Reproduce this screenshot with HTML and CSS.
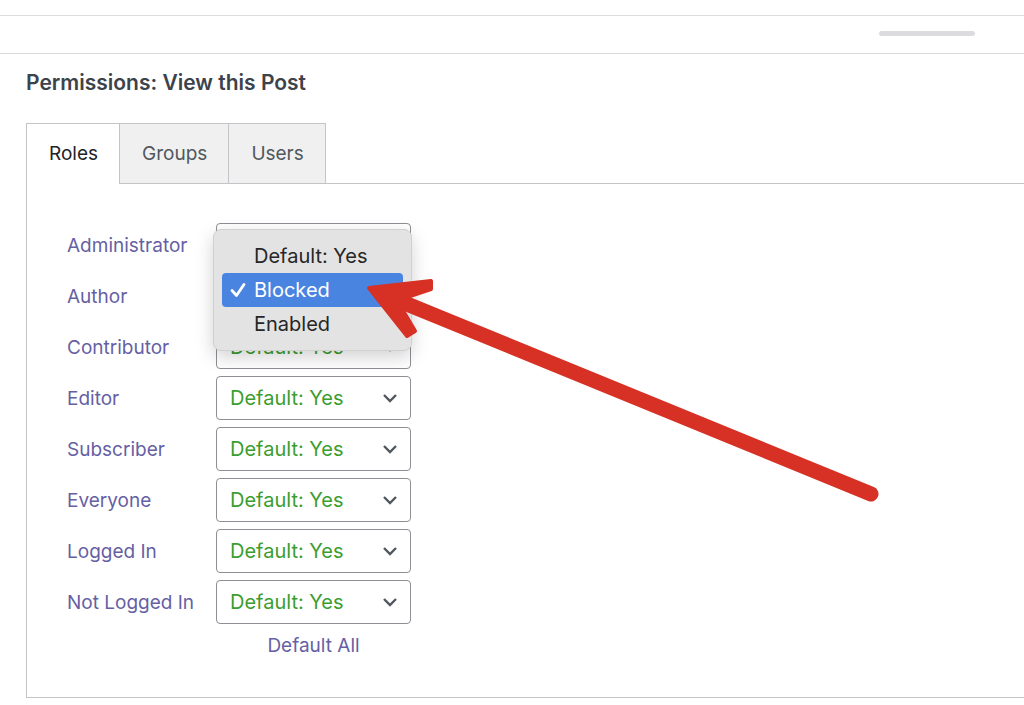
FILE: index.html
```html
<!DOCTYPE html>
<html lang="en">
<head>
  <meta charset="UTF-8" />
  <title>Permissions: View this Post</title>
  <link rel="stylesheet" href="styles.css">
</head>
<body>
  <div class="topbar">
    <span class="handle"></span>
  </div>

  <div class="content">
    <h2>Permissions: View this Post</h2>

    <div class="tabs">
      <div class="tab active">Roles</div>
      <div class="tab">Groups</div>
      <div class="tab">Users</div>
    </div>

    <div class="panel">
      <div class="roles">
        <span class="role">Administrator</span>
        <div class="select">Default: Yes<svg class="chev" viewBox="0 0 16 10"><path d="M2 2l6 6 6-6"/></svg></div>
        <span class="role">Author</span>
        <div class="select">Default: Yes<svg class="chev" viewBox="0 0 16 10"><path d="M2 2l6 6 6-6"/></svg></div>
        <span class="role">Contributor</span>
        <div class="select">Default: Yes<svg class="chev" viewBox="0 0 16 10"><path d="M2 2l6 6 6-6"/></svg></div>
        <span class="role">Editor</span>
        <div class="select">Default: Yes<svg class="chev" viewBox="0 0 16 10"><path d="M2 2l6 6 6-6"/></svg></div>
        <span class="role">Subscriber</span>
        <div class="select">Default: Yes<svg class="chev" viewBox="0 0 16 10"><path d="M2 2l6 6 6-6"/></svg></div>
        <span class="role">Everyone</span>
        <div class="select">Default: Yes<svg class="chev" viewBox="0 0 16 10"><path d="M2 2l6 6 6-6"/></svg></div>
        <span class="role">Logged In</span>
        <div class="select">Default: Yes<svg class="chev" viewBox="0 0 16 10"><path d="M2 2l6 6 6-6"/></svg></div>
        <span class="role">Not Logged In</span>
        <div class="select">Default: Yes<svg class="chev" viewBox="0 0 16 10"><path d="M2 2l6 6 6-6"/></svg></div>
        <span></span>
        <a class="default-all">Default All</a>
      </div>
    </div>
  </div>

  <!-- open select menu -->
  <div class="menu">
    <div class="menu-item">Default: Yes</div>
    <div class="menu-item selected">
      <svg class="check" viewBox="0 0 16 16"><path d="M2 8.5l4.5 5L14 2.5"/></svg>Blocked
    </div>
    <div class="menu-item">Enabled</div>
  </div>

  <!-- annotation arrow -->
  <svg class="arrow" width="1024" height="705" viewBox="0 0 1024 705">
    <line x1="871" y1="494" x2="402" y2="302" />
    <polygon points="369,288 431,281 431,289 410,296 402,309 415,331 407,336" />
  </svg>
</body>
</html>
```

FILE: styles.css
```css
body {
  margin: 0;
  font-family: Inter, "Liberation Sans", Arial, sans-serif;
  background: #fff;
  color: #1d2327;
  overflow: hidden;
}
.topbar {
  margin-top: 15px;
  height: 37px;
  border-top: 1px solid #dcdcde;
  border-bottom: 1px solid #dcdcde;
  display: flex;
  justify-content: flex-end;
  align-items: center;
  padding-right: 49px;
}
.handle {
  width: 96px;
  height: 5px;
  border-radius: 3px;
  background: #dcdcde;
  margin-top: -2px;
}
.content {
  padding-left: 26px;
}
h2 {
  margin: 17px 0 0;
  font-size: 21px;
  font-weight: 600;
  line-height: 24px;
  color: #3c434a;
}
.tabs {
  display: flex;
  margin-top: 28px;
}
.tab {
  height: 59px;
  line-height: 59px;
  padding: 0 21px 0 22px;
  font-size: 19px;
  color: #50575e;
  background: #f0f0f1;
  border: 1px solid #c3c4c7;
  border-bottom: none;
  margin-right: -1px;
}
.tab.active {
  background: #fff;
  color: #1d2327;
  position: relative;
  z-index: 1;
  height: 60px;
  margin-bottom: -1px;
}
.panel {
  border-top: 1px solid #c3c4c7;
  border-left: 1px solid #c3c4c7;
  border-bottom: 1px solid #c3c4c7;
  padding: 39px 0 22px 40px;
}
.roles {
  display: grid;
  grid-template-columns: 149px 195px;
  grid-auto-rows: 44px;
  row-gap: 7px;
  align-items: center;
}
.role {
  font-size: 19px;
  color: #665fa4;
}
.select {
  box-sizing: border-box;
  height: 44px;
  border: 1px solid #8c8f94;
  border-radius: 4px;
  padding: 0 12px 0 13px;
  display: flex;
  align-items: center;
  justify-content: space-between;
  font-size: 20px;
  color: #3c9d2f;
}
.chev {
  width: 16px;
  height: 10px;
  fill: none;
  stroke: #50575e;
  stroke-width: 2.4;
}
.default-all {
  text-align: center;
  font-size: 19px;
  color: #665fa4;
  align-self: start;
  margin-top: 3px;
}
.menu {
  position: absolute;
  left: 213px;
  top: 229px;
  width: 181px;
  padding: 9px 8px;
  background: #e3e3e3;
  border: 1px solid #d0d0d0;
  border-radius: 8px;
  box-shadow: 0 6px 18px rgba(0, 0, 0, 0.18);
}
.menu-item {
  height: 34px;
  line-height: 34px;
  padding-left: 32px;
  font-size: 20px;
  color: #262626;
  border-radius: 4px;
  position: relative;
}
.menu-item.selected {
  background: #4a84e1;
  color: #fff;
}
.check {
  position: absolute;
  left: 8px;
  top: 9px;
  width: 16px;
  height: 16px;
  fill: none;
  stroke: #fff;
  stroke-width: 2.8;
  stroke-linecap: round;
  stroke-linejoin: round;
}
.arrow {
  position: absolute;
  left: 0;
  top: 0;
  pointer-events: none;
}
.arrow line {
  stroke: #d63124;
  stroke-width: 15;
  stroke-linecap: round;
}
.arrow polygon {
  fill: #d63124;
  stroke: #d63124;
  stroke-width: 4;
  stroke-linejoin: round;
}
```
